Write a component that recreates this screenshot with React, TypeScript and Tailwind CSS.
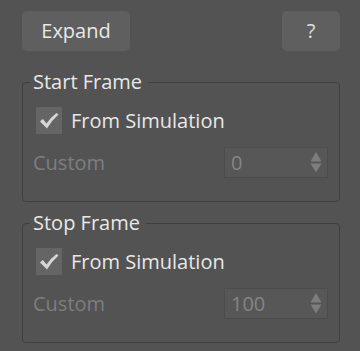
import React from 'react';

const FONT = { fontFamily: '"Open Sans", "Noto Sans", Arial, sans-serif' };

function CheckIcon() {
  return (
    <svg width="26" height="27" viewBox="0 0 26 27">
      <path d="M4 14.5 Q5.5 12.5 7 12 L10.5 16.5 Q15 10 20.5 6 L22.5 7.5 Q15.5 13.5 11 21.5 Z" fill="#d6d6d6" />
    </svg>
  );
}

function SpinBox({ value }: { value: string }) {
  return (
    <div className="flex h-[31px] w-[104px] items-center justify-between border border-[#4c4c4c] bg-[#575757] pl-[6px] pr-[5px]">
      <span className="text-[20px] leading-none text-[#858585]">{value}</span>
      <svg width="12" height="21" viewBox="0 0 12 21">
        <path d="M6 0 L11.5 9.5 L0.5 9.5 Z" fill="#7d7d7d" />
        <path d="M0.5 11.5 L11.5 11.5 L6 20.5 Z" fill="#7d7d7d" />
      </svg>
    </div>
  );
}

function FrameGroup({ title, value }: { title: string; value: string }) {
  return (
    <fieldset className="rounded-[4px] border border-[#3f3f3f] pl-[7px] pr-[11px] pb-[23px]">
      <legend className="pl-[3px] pr-[6px] text-[20px] leading-[24px] text-[#e8e8e8]">{title}</legend>
      <div className="mt-[13px] flex items-center gap-[9px] pl-[6px]">
        <div className="flex h-[27px] w-[26px] items-center justify-center bg-[#656565]">
          <CheckIcon />
        </div>
        <span className="text-[20px] leading-none text-[#e8e8e8]">From Simulation</span>
      </div>
      <div className="mt-[13px] flex items-center justify-between pl-[3px]">
        <span className="text-[20px] leading-none text-[#7e7e7e]">Custom</span>
        <SpinBox value={value} />
      </div>
    </fieldset>
  );
}

export default function App() {
  return (
    <div className="h-[351px] w-[360px] bg-[#535353] pl-[22px] pr-[20px] pt-[11px]" style={FONT}>
      <div className="flex">
        <button className="h-[40px] w-[108px] rounded-[5px] bg-[#5f5f5f] text-[20px] text-[#e8e8e8]">Expand</button>
        <button className="ml-auto h-[40px] w-[58px] rounded-[5px] bg-[#5f5f5f] text-[20px] text-[#e0e0e0]">?</button>
      </div>
      <div className="mt-[19px] flex flex-col gap-[9px]">
        <FrameGroup title="Start Frame" value="0" />
        <FrameGroup title="Stop Frame" value="100" />
      </div>
    </div>
  );
}
